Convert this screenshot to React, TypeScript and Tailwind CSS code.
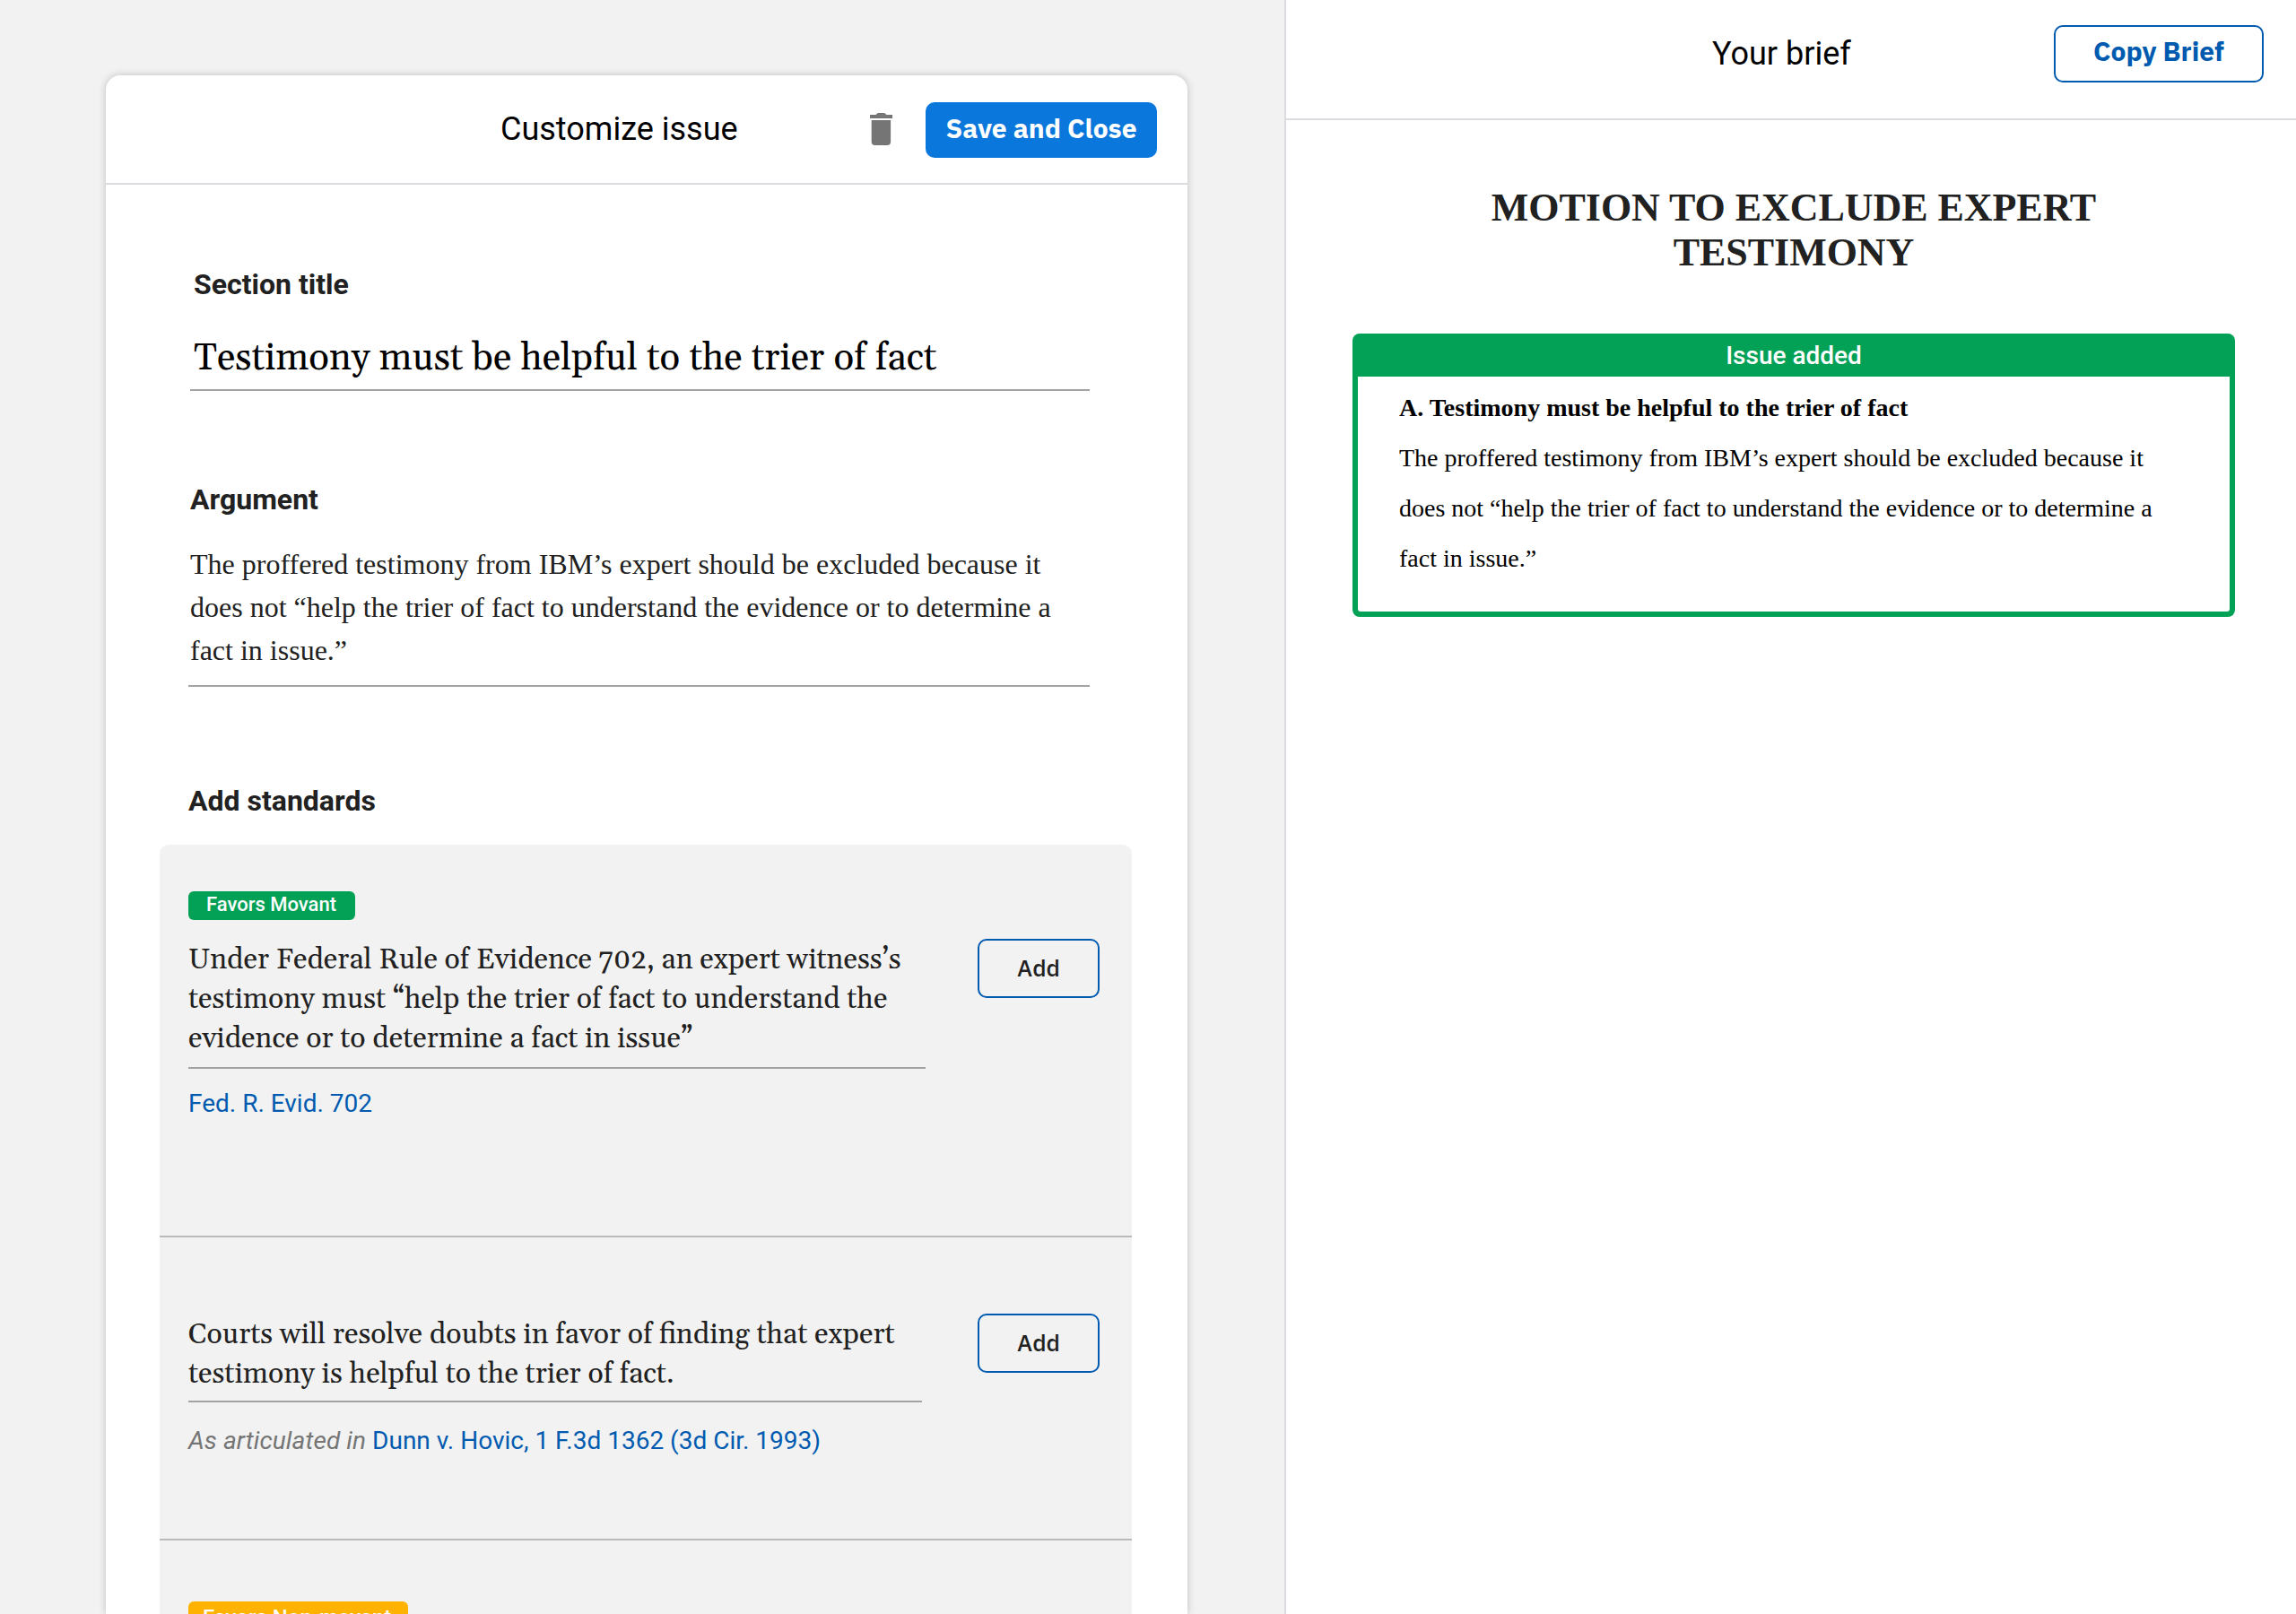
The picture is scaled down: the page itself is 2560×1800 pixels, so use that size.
import React from "react";

const georgia = "font-['Gelasio','Georgia','Liberation_Serif',serif]";
const times = "font-['Liberation_Serif','Times_New_Roman',serif]";
const plex = "font-['IBM_Plex_Sans','Roboto',sans-serif]";

function TrashIcon() {
  return (
    <svg width="25" height="36" viewBox="0 0 25 36" fill="#757575">
      <path d="M0 2h6.5l1.6-1.6A1.4 1.4 0 0 1 9.1 0h6.8a1.4 1.4 0 0 1 1 .4L18.500 2H25v4H0z" />
      <path d="M1.700 8h21.400v24a4 4 0 0 1-4 4H5.700a4 4 0 0 1-4-4z" />
    </svg>
  );
}

function AddButton() {
  return (
    <button
      className={`${plex} ml-auto mr-9 h-[66px] w-[136px] shrink-0 rounded-[10px] border-2 border-[#005bb0] pb-[2px] text-[26px] leading-[36px] font-medium text-[#212121]`}
    >
      Add
    </button>
  );
}

function CustomizeCard() {
  return (
    <section className="mt-[84px] ml-[118px] w-[1206px] rounded-t-[16px] bg-white shadow-[0_0_8px_rgba(0,0,0,0.22)]">
      <header className="flex h-[122px] items-center border-b-2 border-[#dbdbe0] pl-[440px]">
        <h1 className="w-[412px] text-[36px] leading-[48px] text-black">Customize issue</h1>
        <TrashIcon />
        <button
          className={`${plex} relative top-px ml-[37px] h-[62px] w-[258px] rounded-[10px] bg-[#0a77dc] pb-[4px] text-[30px] leading-[40px] font-bold text-white`}
        >
          Save and Close
        </button>
      </header>

      <div className="pt-[91px]">
        <h2 className="pl-[98px] text-[32px] leading-[40px] font-bold">Section title</h2>
        <div
          className={`${georgia} mt-[37px] ml-[94px] h-[62px] w-[1003px] border-b-2 border-[#a3a3a3] pl-[4px] text-[42px] leading-[52px] text-black`}
        >
          Testimony must be helpful to the trier of fact
        </div>

        <h2 className="mt-[101px] pl-[94px] text-[32px] leading-[40px] font-bold">Argument</h2>
        <p
          className={`${times} mt-[28px] ml-[92px] h-[161px] w-[1005px] border-b-2 border-[#a3a3a3] pl-[2px] text-[32px] leading-[48px]`}
        >
          The proffered testimony from IBM’s expert should be excluded because it
          <br />
          does not “help the trier of fact to understand the evidence or to determine a
          <br />
          fact in issue.”
        </p>

        <h2 className="mt-[107px] pl-[92px] text-[32px] leading-[40px] font-bold">Add standards</h2>
      </div>

      <div className="mt-[29px] ml-[60px] w-[1084px] rounded-t-[10px] bg-[#f2f2f2]">
        <article className="flex h-[438px] border-b-2 border-[#bababa] pl-8">
          <div className="w-[822px] pt-[52px]">
            <span className="block h-8 w-[186px] rounded-[6px] bg-[#03a156] pl-5 text-[22px] leading-[29px] font-medium text-white">
              Favors Movant
            </span>
            <p
              className={`${georgia} mt-[23px] h-[143px] border-b-2 border-[#a3a3a3] text-[32px] leading-[44px] whitespace-nowrap`}
            >
              Under Federal Rule of Evidence 702, an expert witness’s
              <br />
              testimony must “help the trier of fact to understand the
              <br />
              evidence or to determine a fact in issue”
            </p>
            <p className="mt-[21px] text-[28px] leading-[36px] text-[#005bb0]">Fed. R. Evid. 702</p>
          </div>
          <div className="flex flex-1 pt-[105px]">
            <AddButton />
          </div>
        </article>

        <article className="flex h-[338px] border-b-2 border-[#bababa] pl-8">
          <div className="w-[818px] pt-[87px]">
            <p
              className={`${georgia} h-[97px] border-b-2 border-[#a3a3a3] text-[32px] leading-[44px] whitespace-nowrap`}
            >
              Courts will resolve doubts in favor of finding that expert
              <br />
              testimony is helpful to the trier of fact.
            </p>
            <p className="mt-[25px] text-[28px] leading-[36px] text-[#005bb0]">
              <em className="tracking-[0.1px] text-[#757575]">As articulated in</em> Dunn v. Hovic, 1 F.3d 1362 (3d Cir. 1993)
            </p>
          </div>
          <div className="flex flex-1 pt-[85px]">
            <AddButton />
          </div>
        </article>

        <article className="h-[200px] pt-[68px] pl-8">
          <span className="block h-9 w-[245px] rounded-[6px] bg-[#ffb300] pl-4 text-[24px] leading-[36px] font-medium text-white">
            Favors Non-movant
          </span>
        </article>
      </div>
    </section>
  );
}

function BriefPanel() {
  return (
    <aside className="h-full w-[1128px] shrink-0 border-l-2 border-[#dbdbe0] bg-white">
      <header className="flex h-[134px] items-start justify-between border-b-2 border-[#dbdbe0] pt-[28px] pr-9 pl-[475px]">
        <h1 className="text-[36px] leading-[64px] text-black">Your brief</h1>
        <button
          className={`${plex} h-16 w-[234px] rounded-[10px] border-2 border-[#005bb0] pb-[6px] text-[30px] leading-[40px] font-bold text-[#005bb0]`}
        >
          Copy Brief
        </button>
      </header>

      <div className="pt-[73px] pr-[68px] pl-[74px]">
        <h2 className={`${times} text-center text-[44px] leading-[50px] font-bold tracking-[-0.04px]`}>
          MOTION TO EXCLUDE EXPERT
          <br />
          TESTIMONY
        </h2>
        <section className="mt-[65px] h-[316px] rounded-[8px] border-x-[6px] border-b-[6px] border-[#03a156] bg-[#03a156]">
          <div className="h-12 text-center text-[28px] leading-[50px] font-medium text-white">Issue added</div>
          <div
            className={`${times} h-[262px] rounded-b-[3px] bg-white pt-[7px] pl-[46px] text-[28px] leading-[56px] text-black`}
          >
            <h3 className="font-bold">A. Testimony must be helpful to the trier of fact</h3>
            <p>
              The proffered testimony from IBM’s expert should be excluded because it
              <br />
              does not “help the trier of fact to understand the evidence or to determine a
              <br />
              fact in issue.”
            </p>
          </div>
        </section>
      </div>
    </aside>
  );
}

export default function App() {
  return (
    <div className="flex h-[1800px] w-[2560px] justify-between overflow-hidden bg-[#f2f2f2] font-['Roboto',sans-serif] text-[#212121]">
      <CustomizeCard />
      <BriefPanel />
    </div>
  );
}
